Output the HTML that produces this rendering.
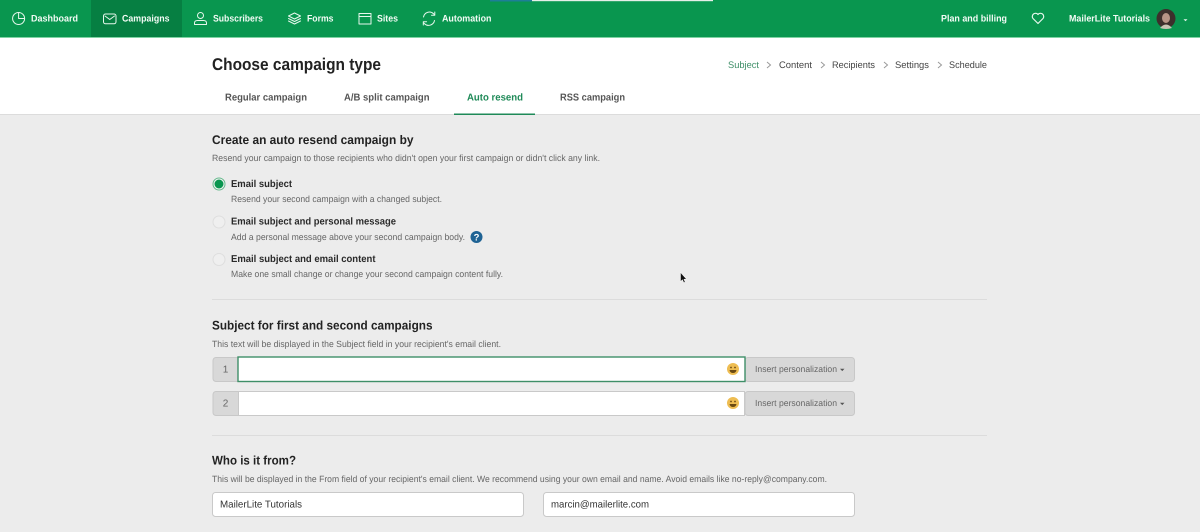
<!DOCTYPE html>
<html><head><meta charset="utf-8"><title>Choose campaign type</title>
<style>
html,body{margin:0;padding:0;width:1200px;height:532px;overflow:hidden;background:#ececec}
svg{display:block;filter:blur(.3px)}
text{font-family:"Liberation Sans",sans-serif;text-rendering:geometricPrecision}
.n{font-size:9.5px;font-weight:700;fill:#f2fbf5}
.t{font-size:10px;font-weight:700;fill:#555}
.s{font-size:9.5px;fill:#444}
.h{font-size:12.5px;font-weight:700;fill:#222}
.d{font-size:9px;fill:#666}
.l{font-size:10px;font-weight:700;fill:#2a2a2a}
.i{fill:none;stroke:#e6f7ec;stroke-width:1;stroke-linecap:round;stroke-linejoin:round}
.c{fill:none;stroke:#9a9a9a;stroke-width:1}
</style></head><body>
<svg width="1200" height="532" viewBox="0 0 1200 532" xmlns="http://www.w3.org/2000/svg">
<rect width="1200" height="532" fill="#ececec"/>
<rect width="1200" height="114" fill="#fff"/>
<rect y="114" width="1200" height="1" fill="#dcdcdc"/>
<rect width="1200" height="37" fill="#09964f"/>
<rect y="37" width="1200" height="1" fill="#7fd3a3"/>
<rect x="91" width="91" height="37" fill="#067f42"/>
<rect x="490" width="42" height="1.5" fill="#1d7f97"/>
<rect x="532" width="181" height="1.2" fill="#e6efe9"/>

<!-- nav icons -->
<g class="i">
<circle cx="18.600" cy="18.500" r="6"/><path d="M18.600 12.500V18.500H24.600"/>
<rect x="103.500" y="14" width="12.500" height="9.800" rx="2"/><path d="M105 16l4.750 3.500L114.500 16"/>
<circle cx="200.500" cy="15.500" r="3"/><path d="M194.500 24.500v-1.500q0-2.500 3-2.500h6q3 0 3 2.500v1.500z"/>
<path d="M294.500 13l6 3-6 3-6-3z"/><path d="M288.500 18.500l6 3 6-3"/><path d="M288.500 21l6 3 6-3"/>
<rect x="359" y="13.500" width="12" height="10.500"/><path d="M359 16.500h12"/>
<path d="M423.500 17a6 6 0 0 1 10-3.300l1.200 1.300M434.800 12v3.300h-3.300"/><path d="M434.500 20.500a6 6 0 0 1-10 3.200l-1.200-1.200M423.300 25v-3.200h3.300"/>
<path d="M1038 23.500l-5-5a3.200 3.200 0 0 1 5-4 3.200 3.200 0 0 1 5 4z" stroke-width="1.200"/>
</g>

<!-- nav labels -->
<text class="n" x="31" y="21.500" textLength="47" lengthAdjust="spacingAndGlyphs">Dashboard</text>
<text class="n" x="122" y="21.500" textLength="47.500" lengthAdjust="spacingAndGlyphs">Campaigns</text>
<text class="n" x="213" y="21.500" textLength="50" lengthAdjust="spacingAndGlyphs">Subscribers</text>
<text class="n" x="307" y="21.500" textLength="26.500" lengthAdjust="spacingAndGlyphs">Forms</text>
<text class="n" x="377" y="21.500" textLength="21" lengthAdjust="spacingAndGlyphs">Sites</text>
<text class="n" x="442" y="21.500" textLength="49.500" lengthAdjust="spacingAndGlyphs">Automation</text>
<text class="n" x="941" y="21.500" textLength="66" lengthAdjust="spacingAndGlyphs">Plan and billing</text>
<text class="n" x="1069" y="21.500" textLength="81" lengthAdjust="spacingAndGlyphs">MailerLite Tutorials</text>

<!-- avatar -->
<circle cx="1166" cy="18.500" r="9.500" fill="#3d2f2c"/>
<ellipse cx="1166" cy="18" rx="4" ry="5" fill="#b89486"/>
<path d="M1160 28q6-7 12 0q-6 2-12 0z" fill="#c9c4b4"/>
<path d="M1183.500 19.200h4l-2 2z" fill="#e6f7ec"/>

<!-- header -->
<text x="212" y="70" font-size="17" font-weight="700" fill="#222" textLength="169" lengthAdjust="spacingAndGlyphs">Choose campaign type</text>
<text class="s" x="728" y="68" style="fill:#3f8f68" textLength="31" lengthAdjust="spacingAndGlyphs">Subject</text>
<text class="s" x="779" y="68" textLength="33" lengthAdjust="spacingAndGlyphs">Content</text>
<text class="s" x="832" y="68" textLength="43" lengthAdjust="spacingAndGlyphs">Recipients</text>
<text class="s" x="895" y="68" textLength="34" lengthAdjust="spacingAndGlyphs">Settings</text>
<text class="s" x="949" y="68" textLength="38" lengthAdjust="spacingAndGlyphs">Schedule</text>
<g class="c">
<path d="M767 62l3.500 3-3.500 3"/><path d="M821 62l3.500 3-3.500 3"/><path d="M884 62l3.500 3-3.500 3"/><path d="M938 62l3.500 3-3.500 3"/>
</g>

<!-- tabs -->
<text class="t" x="225" y="100.500" textLength="82" lengthAdjust="spacingAndGlyphs">Regular campaign</text>
<text class="t" x="344" y="100.500" textLength="85.500" lengthAdjust="spacingAndGlyphs">A/B split campaign</text>
<text class="t" x="467" y="100.500" style="fill:#1f8a58" textLength="56" lengthAdjust="spacingAndGlyphs">Auto resend</text>
<text class="t" x="560" y="100.500" textLength="65" lengthAdjust="spacingAndGlyphs">RSS campaign</text>
<rect x="454" y="113.500" width="81" height="1.500" fill="#1f8a58"/>

<!-- section 1 -->
<text class="h" x="212" y="144" textLength="201.500" lengthAdjust="spacingAndGlyphs">Create an auto resend campaign by</text>
<text class="d" x="212" y="161" textLength="388" lengthAdjust="spacingAndGlyphs">Resend your campaign to those recipients who didn't open your first campaign or didn't click any link.</text>

<circle cx="219" cy="184" r="6" fill="#f4f4f4" stroke="#65b98c" stroke-width="1"/>
<circle cx="219" cy="184" r="4.500" fill="#09964f"/>
<text class="l" x="231" y="187" textLength="61" lengthAdjust="spacingAndGlyphs">Email subject</text>
<text class="d" x="231" y="202" textLength="211" lengthAdjust="spacingAndGlyphs">Resend your second campaign with a changed subject.</text>

<circle cx="219" cy="222" r="6" fill="#efefef" stroke="#dedede" stroke-width="1"/>
<text class="l" x="231" y="224.500" textLength="165" lengthAdjust="spacingAndGlyphs">Email subject and personal message</text>
<text class="d" x="231" y="240" textLength="234" lengthAdjust="spacingAndGlyphs">Add a personal message above your second campaign body.</text>
<circle cx="476.500" cy="237" r="6" fill="#1f6394"/>
<text x="476.500" y="240.500" font-size="9.500" font-weight="700" fill="#fff" text-anchor="middle">?</text>

<circle cx="219" cy="259.500" r="6" fill="#efefef" stroke="#dedede" stroke-width="1"/>
<text class="l" x="231" y="262" textLength="144.500" lengthAdjust="spacingAndGlyphs">Email subject and email content</text>
<text class="d" x="231" y="277" textLength="272" lengthAdjust="spacingAndGlyphs">Make one small change or change your second campaign content fully.</text>

<!-- cursor -->
<path d="M680.500 272.500v9l2-1.800 1.300 3 1.400-.6-1.300-2.900h2.600z" fill="#111" stroke="#fff" stroke-width=".5"/>

<rect x="212" y="299" width="775" height="1" fill="#dcdcdc"/>

<!-- section 2 -->
<text class="h" x="212" y="329.500" textLength="220.500" lengthAdjust="spacingAndGlyphs">Subject for first and second campaigns</text>
<text class="d" x="212" y="347" textLength="289" lengthAdjust="spacingAndGlyphs">This text will be displayed in the Subject field in your recipient's email client.</text>

<!-- row 1 -->
<rect x="213" y="357.500" width="30" height="24" rx="3" fill="#d8d8d8" stroke="#c8c8c8"/>
<text x="225.500" y="372.500" font-size="10" fill="#666" text-anchor="middle">1</text>
<rect x="745" y="357.500" width="109.500" height="24" rx="3" fill="#d8d8d8" stroke="#c8c8c8"/>
<rect x="238" y="357" width="507" height="24.500" fill="#fff" stroke="#3f8f68" stroke-width="1.400"/>
<circle cx="733" cy="369" r="6" fill="#eebd52"/>
<circle cx="731" cy="367.500" r=".9" fill="#6b4a12"/><circle cx="735" cy="367.500" r=".9" fill="#6b4a12"/>
<path d="M729.500 370h7q-.6 3-3.500 3t-3.500-3z" fill="#6b4a12"/>
<text x="755" y="372" font-size="8.800" fill="#666" textLength="82" lengthAdjust="spacingAndGlyphs">Insert personalization</text>
<path d="M840 368.800h4.500l-2.250 2.300z" fill="#555"/>

<!-- row 2 -->
<rect x="213" y="391.500" width="30" height="24" rx="3" fill="#d8d8d8" stroke="#c8c8c8"/>
<text x="225.500" y="406.500" font-size="10" fill="#666" text-anchor="middle">2</text>
<rect x="745" y="391.500" width="109.500" height="24" rx="3" fill="#d8d8d8" stroke="#c8c8c8"/>
<rect x="238.500" y="391.500" width="506" height="24" fill="#fff" stroke="#c9c9c9" stroke-width="1"/>
<circle cx="733" cy="403" r="6" fill="#eebd52"/>
<circle cx="731" cy="401.500" r=".9" fill="#6b4a12"/><circle cx="735" cy="401.500" r=".9" fill="#6b4a12"/>
<path d="M729.500 404h7q-.6 3-3.500 3t-3.500-3z" fill="#6b4a12"/>
<text x="755" y="406" font-size="8.800" fill="#666" textLength="82" lengthAdjust="spacingAndGlyphs">Insert personalization</text>
<path d="M840 402.800h4.500l-2.250 2.300z" fill="#555"/>

<rect x="212" y="435" width="775" height="1" fill="#dcdcdc"/>

<!-- section 3 -->
<text class="h" x="212" y="464.500" textLength="84" lengthAdjust="spacingAndGlyphs">Who is it from?</text>
<text class="d" x="212" y="482" textLength="615" lengthAdjust="spacingAndGlyphs">This will be displayed in the From field of your recipient's email client. We recommend using your own email and name. Avoid emails like no-reply@company.com.</text>
<rect x="212.500" y="492.500" width="311" height="24" rx="3" fill="#fff" stroke="#c9c9c9"/>
<text x="220" y="507.500" font-size="10" fill="#333" textLength="82" lengthAdjust="spacingAndGlyphs">MailerLite Tutorials</text>
<rect x="543.500" y="492.500" width="311" height="24" rx="3" fill="#fff" stroke="#c9c9c9"/>
<text x="551" y="507.500" font-size="10" fill="#333" textLength="98" lengthAdjust="spacingAndGlyphs">marcin@mailerlite.com</text>
</svg>
</body></html>
